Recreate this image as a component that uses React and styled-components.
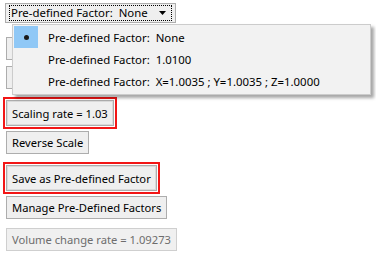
import React from "react";
import styled, { createGlobalStyle } from "styled-components";

const GlobalStyle = createGlobalStyle`
  html, body {
    margin: 0;
    padding: 0;
    background: #ffffff;
  }
  body {
    font-family: "Noto Sans", "Open Sans", Arial, sans-serif;
    font-size: 11px;
    color: #000000;
  }
`;

const items = [
  { label: "Pre-defined Factor:  None", checked: true },
  { label: "Pre-defined Factor:  1.0100" },
  { label: "Pre-defined Factor:  X=1.0035 ; Y=1.0035 ; Z=1.0000" },
];

function App() {
  return (
    <>
      <GlobalStyle />
      <Page>
        <Combo>
          <ComboFocus>
            <ComboText>Pre-defined Factor:  None</ComboText>
            <Arrow viewBox="0 0 7 4">
              <path d="M0 0h7L3.5 4z" fill="#000" />
            </Arrow>
          </ComboFocus>
        </Combo>

        <Button $top={14}>Scale X</Button>
        <Button $top={6}>Scale Y</Button>

        <Highlight $top={8}>
          <Button $tall>Scaling rate = 1.03</Button>
        </Highlight>
        <Button $top={2}>Reverse Scale</Button>

        <Highlight $top={8}>
          <Button $tall>Save as Pre-defined Factor</Button>
        </Highlight>
        <Button $top={2}>Manage Pre-Defined Factors</Button>
        <Button $top={9} disabled>
          Volume change rate = 1.09273
        </Button>

        <Menu>
          {items.map((it) => (
            <MenuItem key={it.label}>
              <Check $on={it.checked}>{it.checked && <Dot />}</Check>
              <ItemText>{it.label}</ItemText>
            </MenuItem>
          ))}
        </Menu>
      </Page>
    </>
  );
}

const Page = styled.div`
  position: relative;
  width: 376px;
  height: 256px;
  box-sizing: border-box;
  padding: 3px 0 0 6px;
  display: flex;
  flex-direction: column;
  align-items: flex-start;
  overflow: hidden;
`;

const Combo = styled.div`
  box-sizing: border-box;
  margin-left: -1px;
  width: 171px;
  height: 20px;
  border: 1px solid #adadad;
  background: #efefef;
  padding: 1px 3px 1px 3px;
`;

const ComboFocus = styled.div`
  box-sizing: border-box;
  height: 100%;
  border: 1px dotted #000000;
  display: flex;
  align-items: center;
  justify-content: space-between;
  padding: 0 5px 0 1px;
`;

const ComboText = styled.span`
  white-space: pre;
  font-size: 11.4px;
  line-height: 14px;
`;

const Arrow = styled.svg`
  width: 7px;
  height: 4px;
`;

const Highlight = styled.div`
  margin-top: ${(p) => p.$top || 0}px;
  margin-left: -3px;
  border: 2px solid #f21616;
  padding: 1px;
  display: flex;
`;

const Button = styled.button`
  margin: ${(p) => p.$top || 0}px 0 0 0;
  box-sizing: border-box;
  height: ${(p) => (p.$tall ? 26 : 23)}px;
  padding: 0 5px;
  font-family: inherit;
  font-size: 11.2px;
  color: #000000;
  background: #efefef;
  border: 1px solid #adadad;
  box-shadow: ${(p) => (p.$tall ? "inset 0 0 0 1px #dadada" : "none")};
  white-space: pre;

  &:disabled {
    color: #6d6d6d;
    border-color: #cfcfcf;
    background: #f0f0f0;
  }
`;

const Menu = styled.div`
  position: absolute;
  left: 12px;
  top: 24px;
  width: 359px;
  box-sizing: border-box;
  background: #f2f2f2;
  border: 1px solid #cccccc;
  padding: 1px 1px 2px 1px;
  box-shadow: 3px 3px 3px rgba(0, 0, 0, 0.35);
`;

const MenuItem = styled.div`
  height: 22px;
  display: flex;
  align-items: center;
`;

const Check = styled.div`
  width: 24px;
  height: 22px;
  background: ${(p) => (p.$on ? "#90c8f6" : "transparent")};
  display: flex;
  align-items: center;
  justify-content: center;
`;

const Dot = styled.span`
  width: 5px;
  height: 5px;
  border-radius: 50%;
  background: #1a1a1a;
`;

const ItemText = styled.span`
  margin-left: 10px;
  font-size: 11.4px;
  white-space: pre;
`;

export default App;
